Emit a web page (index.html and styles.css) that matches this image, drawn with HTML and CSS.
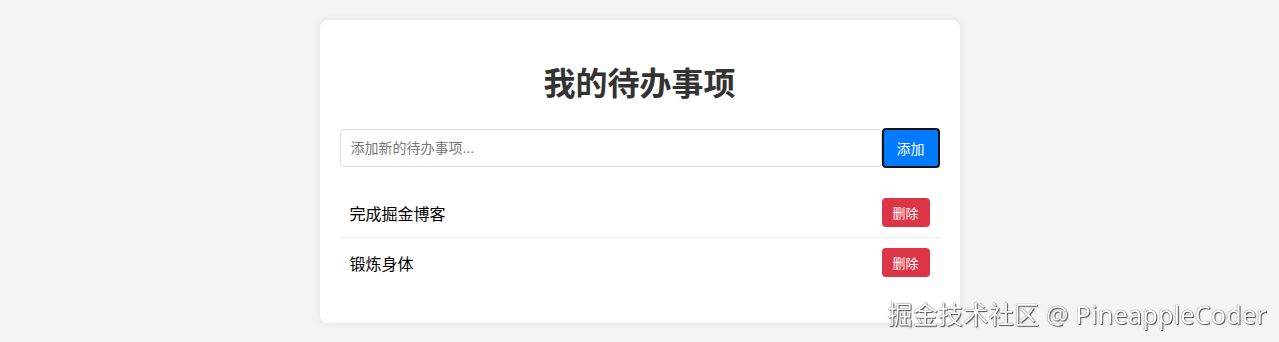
FILE: index.html
```html
<!DOCTYPE html>
<html lang="zh">
<head>
<meta charset="utf-8">
<title>我的待办事项</title>
<link rel="stylesheet" href="styles.css">
</head>
<body>
<div class="card">
  <h1 class="title">我的待办事项</h1>
  <div class="add-row">
    <input class="add-input" type="text" placeholder="添加新的待办事项...">
    <button class="add-btn">添加</button>
  </div>
  <ul class="todo-list">
    <li class="todo-item"><span>完成掘金博客</span><button class="del-btn">删除</button></li>
    <li class="todo-item"><span>锻炼身体</span><button class="del-btn">删除</button></li>
  </ul>
</div>
<div class="watermark">掘金技术社区 @ PineappleCoder</div>
</body>
</html>
```
FILE: styles.css
```css
html, body {
  margin: 0;
  padding: 0;
}
body {
  background: #f4f4f4;
  font-family: "Liberation Sans", "Noto Sans CJK SC", sans-serif;
  padding-top: 20px;
  height: 342px;
  box-sizing: border-box;
  overflow: hidden;
}
.card {
  width: 600px;
  margin: 0 auto;
  background: #fff;
  border-radius: 8px;
  padding: 20px;
  box-shadow: 0 0 10px rgba(0,0,0,0.08);
}
.title {
  text-align: center;
  color: #333;
  font-size: 32px;
  font-weight: bold;
  margin: 21px 0 21px;
  line-height: 46px;
}
.add-row {
  display: flex;
}
.add-input {
  flex: 1;
  padding: 10px;
  font-size: 14px;
  border: 1px solid #ddd;
  border-radius: 4px;
  font-family: inherit;
  height: 38px;
  box-sizing: border-box;
  margin-top: 1px;
}
.add-input::placeholder {
  color: #777;
}
.add-btn {
  width: 58px;
  height: 40px;
  background: #007bff;
  color: #fff;
  border: 2px solid #111;
  border-radius: 4px;
  font-size: 14px;
  font-family: inherit;
  padding: 0;
}
.todo-list {
  list-style: none;
  padding: 0;
  margin: 20px 0 16px;
}
.todo-item {
  display: flex;
  justify-content: space-between;
  align-items: center;
  padding: 10px;
  border-bottom: 1px solid #eee;
  font-size: 16px;
  color: #000;
}
.todo-item:last-child {
  border-bottom: none;
}
.del-btn {
  background: #dc3545;
  color: #fff;
  border: none;
  border-radius: 4px;
  padding: 5px 10px;
  font-size: 13px;
  font-family: inherit;
  height: 29px;
  width: 48px;
}
.watermark {
  position: fixed;
  right: 12px;
  bottom: 11px;
  font-size: 25px;
  color: #fff;
  font-family: "Noto Sans", "Noto Sans CJK SC", sans-serif;
  text-shadow: 0 0 1px #333, 1px 1px 1px #555;
  letter-spacing: 0.3px;
}
```
